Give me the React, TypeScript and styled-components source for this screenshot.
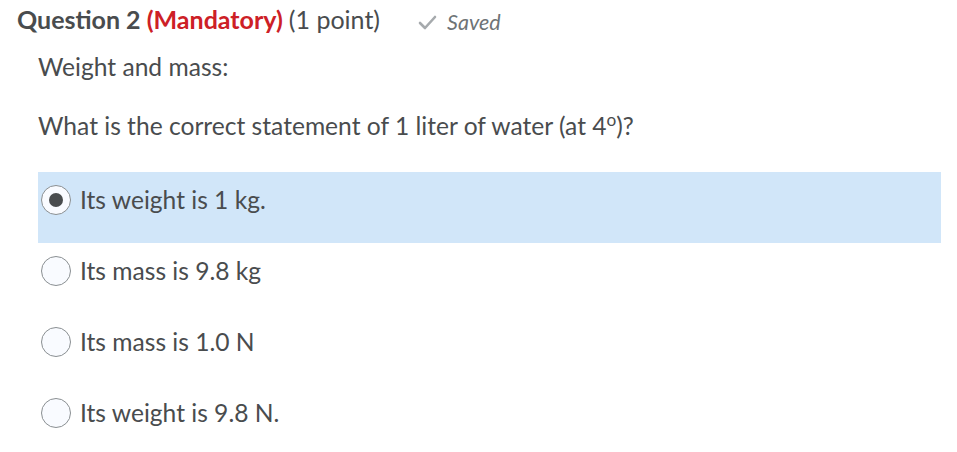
import React, { useState } from 'react';
import styled, { createGlobalStyle } from 'styled-components';

const GlobalStyle = createGlobalStyle`
	html, body {
		margin: 0;
		padding: 0;
		background: #ffffff;
	}
	body {
		font-family: Lato, "Open Sans", sans-serif;
		color: #494c4e;
	}
`;

const Page = styled.div`
	width: 957px;
	height: 452px;
	overflow: hidden;
`;

const Header = styled.div`
	display: flex;
	align-items: baseline;
	padding: 4px 0 0 17px;
	height: 35px;
	box-sizing: border-box;
`;

const Title = styled.h2`
	margin: 0;
	font-size: 25px;
	font-weight: 700;
	line-height: 30px;
	color: #494c4e;
`;

const Mandatory = styled.span`
	color: #cd2026;
`;

const Points = styled.span`
	font-weight: 400;
`;

const SavedTag = styled.span`
	display: inline-flex;
	align-items: center;
	gap: 10px;
	margin-left: 38px;
	font-size: 21.5px;
	font-style: italic;
	color: #6e7376;
	svg {
		position: relative;
		top: 1px;
	}
`;

const Body = styled.div`
	padding-left: 38px;
	padding-right: 16px;
`;

const Paragraph = styled.p<{ top: number }>`
	margin: 0;
	font-size: 24.6px;
	line-height: 30px;
	padding-top: ${(props) => props.top}px;
`;

const Options = styled.div`
	display: flex;
	flex-direction: column;
	margin-top: 31px;
`;

const OptionRow = styled.label<{ selected?: boolean }>`
	display: flex;
	align-items: flex-start;
	gap: 9px;
	height: 71px;
	padding: 13px 0 0 3px;
	box-sizing: border-box;
	background: ${(props) => (props.selected ? '#d1e6f9' : 'transparent')};
	font-size: 24.6px;
	line-height: 30px;
	cursor: pointer;
`;

const Radio = styled.span<{ checked?: boolean }>`
	position: relative;
	flex: none;
	width: 30px;
	height: 30px;
	border-radius: 50%;
	border: 1px solid #8a8f92;
	background: #f9fbff;
	box-sizing: border-box;
	&::after {
		content: '';
		display: ${(props) => (props.checked ? 'block' : 'none')};
		position: absolute;
		top: 7px;
		left: 7px;
		width: 14px;
		height: 14px;
		border-radius: 50%;
		background: #494c4e;
	}
`;

const CheckIcon = () => (
	<svg width="19" height="15" viewBox="0 0 19 15">
		<path d="M2 8 L7 13 L17 2" fill="none" stroke="#a6aaad" strokeWidth="2.6" strokeLinecap="round" strokeLinejoin="round" />
	</svg>
);

const answers = ['Its weight is 1 kg.', 'Its mass is 9.8 kg', 'Its mass is 1.0 N', 'Its weight is 9.8 N.'];

export default function App() {
	const [picked, setPicked] = useState(0);
	return (
		<Page>
			<GlobalStyle />
			<Header>
				<Title>
					Question 2 <Mandatory>(Mandatory)</Mandatory> <Points>(1 point)</Points>
				</Title>
				<SavedTag>
					<CheckIcon />
					Saved
				</SavedTag>
			</Header>
			<Body>
				<Paragraph top={17}>Weight and mass:</Paragraph>
				<Paragraph top={29}>
					What is the correct statement of 1 liter of water (at 4<sup style={{ fontSize: '0.7em', lineHeight: 0 }}>o</sup>)?
				</Paragraph>
				<Options>
					{answers.map((a, i) => (
						<OptionRow key={a} selected={picked === i} onClick={() => setPicked(i)}>
							<Radio checked={picked === i} />
							{a}
						</OptionRow>
					))}
				</Options>
			</Body>
		</Page>
	);
}
